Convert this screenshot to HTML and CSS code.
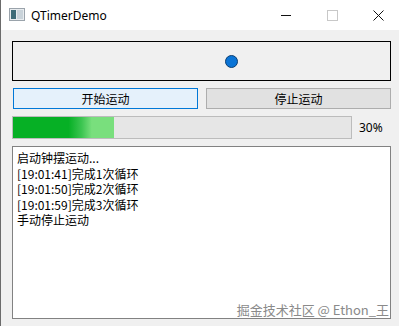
FILE: index.html
```html
<!DOCTYPE html>
<html lang="zh">
  <head>
    <meta charset="UTF-8" />
    <title>QTimerDemo</title>
    <link rel="stylesheet" href="styles.css">
  </head>
  <body>
    <div class="window">
      <div class="titlebar">
        <svg class="app-icon" width="16" height="13" viewBox="0 0 16 13">
          <rect x="0.5" y="0.5" width="15" height="12" fill="#e8ecef" stroke="#9aa3ab"/>
          <rect x="2" y="2" width="5" height="9" fill="#3d6b78"/>
          <rect x="8" y="2" width="6" height="9" fill="#c9d3da"/>
        </svg>
        <span class="title">QTimerDemo</span>
        <div class="controls">
          <span class="ctl ctl-min"></span>
          <span class="ctl ctl-max"></span>
          <svg class="ctl-close" width="11" height="11" viewBox="0 0 11 11">
            <path d="M0.5 0.5 L10.5 10.5 M10.5 0.5 L0.5 10.5" stroke="#111" stroke-width="1"/>
          </svg>
        </div>
      </div>
      <div class="content">
        <div class="pendulum">
          <div class="ball"></div>
        </div>
        <div class="buttons">
          <button class="btn btn-start">开始运动</button>
          <button class="btn btn-stop">停止运动</button>
        </div>
        <div class="progress-row">
          <div class="progress">
            <div class="progress-fill" style="width: 30%"></div>
          </div>
          <span class="progress-label">30%</span>
        </div>
        <div class="log">
          <div>启动钟摆运动...</div>
          <div>[19:01:41]完成1次循环</div>
          <div>[19:01:50]完成2次循环</div>
          <div>[19:01:59]完成3次循环</div>
          <div>手动停止运动</div>
        </div>
      </div>
      <div class="watermark">掘金技术社区 @ Ethon_王</div>
    </div>
  </body>
</html>
```

FILE: styles.css
```css
body {
  margin: 0;
  background: #f0f0f0;
}
.window {
  position: relative;
  width: 398px;
  height: 326px;
  border-left: 1px solid #6b6b6b;
  background: #f0f0f0;
  font-family: "Noto Sans", "Noto Sans CJK SC", sans-serif;
  display: flex;
  flex-direction: column;
}
.titlebar {
  height: 30px;
  background: #fff;
  display: flex;
  align-items: center;
  padding-left: 8px;
}
.app-icon {
  margin-right: 6px;
  margin-top: -1px;
}
.title {
  font-size: 12px;
  color: #000;
}
.controls {
  margin-left: auto;
  display: flex;
  align-items: center;
}
.ctl-min {
  width: 10px;
  height: 1px;
  background: #111;
  margin-right: 36px;
}
.ctl-max {
  width: 9px;
  height: 9px;
  border: 1px solid #c8c8c8;
  margin-right: 35px;
}
.ctl-close {
  margin-right: 15px;
}
.content {
  padding: 11px 8px 0 11px;
  display: flex;
  flex-direction: column;
}
.pendulum {
  height: 38px;
  border: 1px solid #000;
  position: relative;
}
.ball {
  position: absolute;
  left: 212px;
  top: 13px;
  width: 11px;
  height: 11px;
  border-radius: 50%;
  background: #0a74d6;
  border: 1px solid #0b3f73;
}
.buttons {
  display: flex;
  gap: 8px;
  margin-top: 7px;
  padding-left: 1px;
}
.btn {
  flex: 1;
  height: 21px;
  font-family: "Noto Sans CJK SC", sans-serif;
  font-size: 12px;
  color: #000;
  padding: 0;
  border-radius: 0;
}
.btn-start {
  background: #e5f1fb;
  border: 1px solid #0078d7;
}
.btn-stop {
  background: #e1e1e1;
  border: 1px solid #adadad;
}
.progress-row {
  display: flex;
  align-items: center;
  margin-top: 7px;
}
.progress {
  width: 338px;
  height: 21px;
  border: 1px solid #bcbcbc;
  background: #e6e6e6;
}
.progress-fill {
  height: 100%;
  background: linear-gradient(to right, #06b025 0%, #06b025 55%, #3cc551 68%, #79df7d 78%, #79df7d 100%);
}
.progress-label {
  font-size: 12px;
  margin-left: 7px;
  color: #000;
}
.log {
  margin-top: 7px;
  height: 165px;
  background: #fff;
  border: 1px solid #828282;
  padding: 3px 4px;
  font-family: "Noto Sans CJK SC", sans-serif;
  font-size: 12px;
  line-height: 15.5px;
  color: #000;
}
.watermark {
  position: absolute;
  right: 10px;
  bottom: 7px;
  font-family: "Noto Sans CJK SC", sans-serif;
  font-size: 13px;
  color: #8a8a8a;
}
```
